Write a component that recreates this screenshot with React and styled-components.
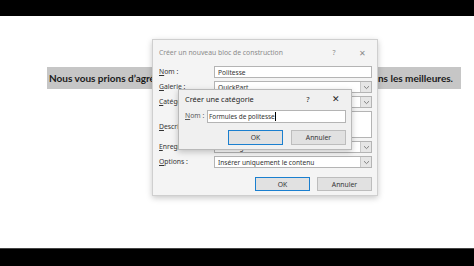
import React from "react";
import styled, { createGlobalStyle } from "styled-components";

const Global = createGlobalStyle`
  html, body { margin: 0; padding: 0; background: #fff; }
  body { width: 474px; height: 266px; overflow: hidden; font-family: "Noto Sans", sans-serif; }
  #root { width: 474px; height: 266px; }
`;

const Page = styled.div`
  width: 474px;
  height: 266px;
  display: flex;
  flex-direction: column;
  background: #fff;
`;

const Bar = styled.div`
  height: ${(p) => p.$h}px;
  background: #000;
  flex: none;
  border-top: ${(p) => (p.$line ? "1px solid #444" : "none")};
  box-sizing: border-box;
`;

const Content = styled.div`
  flex: 1;
  position: relative;
  padding-top: 51px;
  padding-left: 47px;
`;

const Highlight = styled.div`
  width: 414px;
  height: 22px;
  box-sizing: border-box;
  background: #c6c6c6;
  padding: 0 8px 0 2px;
  display: flex;
  justify-content: space-between;
  align-items: center;
  font-family: Lato, "Open Sans", sans-serif;
  font-weight: 700;
  font-size: 10px;
  color: #1a1a1a;
  white-space: nowrap;
  overflow: hidden;
`;

const Dialog = styled.div`
  position: absolute;
  left: ${(p) => p.$x}px;
  top: ${(p) => p.$y}px;
  width: ${(p) => p.$w}px;
  height: ${(p) => p.$h}px;
  box-sizing: border-box;
  background: ${(p) => (p.$active ? "#f0f0f0" : "#f4f4f4")};
  border: 1px solid ${(p) => (p.$active ? "#b9b9b9" : "#cfcfcf")};
  box-shadow: 0 2px 6px rgba(0, 0, 0, 0.22);
  display: flex;
  flex-direction: column;
  padding: 0 5px 0 5px;
`;

const TitleBar = styled.div`
  height: ${(p) => p.$h}px;
  box-sizing: border-box;
  padding-bottom: ${(p) => p.$pb || 0}px;
  display: flex;
  align-items: center;
  flex: none;
  font-size: ${(p) => p.$fs}px;
  color: ${(p) => (p.$active ? "#262626" : "#8a8a8a")};
  white-space: nowrap;
`;

const TitleText = styled.div`
  flex: 1;
  padding-left: 1px;
`;

const TitleBtn = styled.div`
  width: ${(p) => p.$w}px;
  text-align: center;
  font-size: ${(p) => p.$fs}px;
`;

const Form = styled.div`
  display: grid;
  grid-template-columns: ${(p) => p.$label}px 1fr;
  row-gap: 3px;
  align-items: start;
`;

const Label = styled.div`
  font-size: 6.8px;
  color: ${(p) => (p.$dim ? "#5a5a5a" : "#333")};
  height: ${(p) => p.$h || 12}px;
  line-height: ${(p) => p.$lh || 12}px;
  padding-left: 1px;
  white-space: nowrap;
  overflow: hidden;
  u { text-decoration: underline; }
`;

const Field = styled.div`
  height: ${(p) => p.$h || 12}px;
  box-sizing: border-box;
  background: #fff;
  border: 1px solid #b4b4b4;
  display: flex;
  align-items: ${(p) => (p.$top ? "flex-start" : "center")};
  font-size: ${(p) => p.$fs || 6.6}px;
  color: #333;
  padding-left: ${(p) => (p.$pl === undefined ? 3 : p.$pl)}px;
  padding-right: ${(p) => (p.$select ? 0 : 2)}px;
  overflow: hidden;
  white-space: nowrap;
`;

const FieldText = styled.span`
  flex: 1;
  overflow: hidden;
`;

const Caret = styled.span`
  display: inline-block;
  width: 1px;
  height: 9px;
  background: #000;
  vertical-align: middle;
  margin-left: 0.5px;
`;

const Arrow = styled.div`
  width: 10px;
  height: 100%;
  background: #e6e6e6;
  border-left: 1px solid #c8c8c8;
  display: flex;
  align-items: center;
  justify-content: center;
  flex: none;
`;

const Buttons = styled.div`
  display: flex;
  justify-content: flex-end;
  gap: ${(p) => p.$gap}px;
  margin-top: ${(p) => p.$mt}px;
`;

const Button = styled.div`
  width: 55px;
  height: ${(p) => p.$h}px;
  box-sizing: border-box;
  background: #e1e1e1;
  border: ${(p) => (p.$focus ? "1.5px solid #1a7fcf" : "1px solid #bdbdbd")};
  display: flex;
  align-items: center;
  justify-content: center;
  font-size: 6.8px;
  color: #333;
`;

const Chevron = () => (
  <svg width="7" height="5" viewBox="0 0 7 5">
    <path d="M1 1.2 L3.5 3.6 L6 1.2" fill="none" stroke="#777" strokeWidth="0.9" />
  </svg>
);

const Select = ({ children }) => (
  <Field $select>
    <FieldText>{children}</FieldText>
    <Arrow>
      <Chevron />
    </Arrow>
  </Field>
);

export default function App() {
  return (
    <>
      <Global />
      <Page>
        <Bar $h={16} />
        <Content>
          <Highlight>
            <span>Nous vous prions d’agréer, Madame,</span>
            <span>nos sincères salutations les meilleures.</span>
          </Highlight>

          <Dialog $x={152} $y={23} $w={226} $h={157}>
            <TitleBar $h={26} $pb={2} $fs={6.8}>
              <TitleText>Créer un nouveau bloc de construction</TitleText>
              <TitleBtn $w={36} $fs={7}>?</TitleBtn>
              <TitleBtn $w={20} $fs={8}>✕</TitleBtn>
            </TitleBar>
            <Form $label={56}>
              <Label><u>N</u>om :</Label>
              <Field>Politesse</Field>
              <Label><u>G</u>alerie :</Label>
              <Select>QuickPart</Select>
              <Label><u>C</u>atégorie :</Label>
              <Select>Général</Select>
              <Label $h={27} $lh={32}><u>D</u>escription :</Label>
              <Field $h={27} $top />
              <Label><u>E</u>nregistrer dans :</Label>
              <Select>Building Blocks</Select>
              <Label><u>O</u>ptions :</Label>
              <Select>Insérer uniquement le contenu</Select>
            </Form>
            <Buttons $gap={7} $mt={9}>
              <Button $h={14} $focus>OK</Button>
              <Button $h={14}>Annuler</Button>
            </Buttons>
          </Dialog>

          <Dialog $x={178} $y={73} $w={174} $h={61} $active>
            <TitleBar $h={20} $pb={3} $fs={7.4} $active>
              <TitleText>Créer une catégorie</TitleText>
              <TitleBtn $w={36} $fs={7.5}>?</TitleBtn>
              <TitleBtn $w={20} $fs={8.5}>✕</TitleBtn>
            </TitleBar>
            <Form $label={23}>
              <Label $dim><u>N</u>om :</Label>
              <Field $h={13} $pl={1} $fs={6.4}>
                Formules de politesse<Caret />
              </Field>
            </Form>
            <Buttons $gap={8} $mt={7}>
              <Button $h={15} $focus>OK</Button>
              <Button $h={15}>Annuler</Button>
            </Buttons>
          </Dialog>
        </Content>
        <Bar $h={18} $line />
      </Page>
    </>
  );
}
